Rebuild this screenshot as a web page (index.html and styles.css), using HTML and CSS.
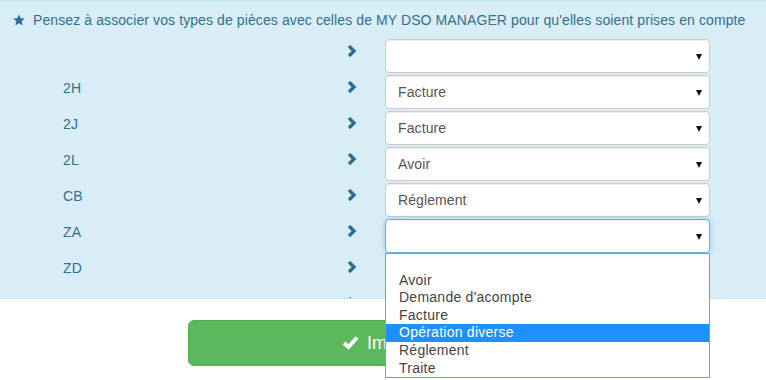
FILE: index.html
```html
<!DOCTYPE html>
<html lang="fr">
<head>
    <meta charset="UTF-8">
    <meta name="viewport" content="width=device-width, initial-scale=1.0">
    <title>Correspondance des types de pièces</title>
    <link rel="stylesheet" href="styles.css">
</head>
<body>
    <div class="page">
        <div class="panel">
            <p class="notice">
                <svg class="star" width="12" height="12" viewBox="0 0 24 24"><path d="M12 0.5l3.3 7.9 8.4 0.6-6.4 5.5 2 8.3L12 18.3l-7.3 4.5 2-8.3L0.3 9l8.4-0.6z"/></svg>
                Pensez à associer vos types de pièces avec celles de MY DSO MANAGER pour qu'elles soient prises en compte
            </p>

            <div class="row">
                <div class="code"></div>
                <div class="arrow"><svg width="10" height="12" viewBox="0 0 10 12"><polyline points="2,1 7,6 2,11"/></svg></div>
                <div class="field"><select class="form-control"><option></option></select></div>
            </div>
            <div class="row">
                <div class="code">2H</div>
                <div class="arrow"><svg width="10" height="12" viewBox="0 0 10 12"><polyline points="2,1 7,6 2,11"/></svg></div>
                <div class="field"><select class="form-control"><option>Facture</option></select></div>
            </div>
            <div class="row">
                <div class="code">2J</div>
                <div class="arrow"><svg width="10" height="12" viewBox="0 0 10 12"><polyline points="2,1 7,6 2,11"/></svg></div>
                <div class="field"><select class="form-control"><option>Facture</option></select></div>
            </div>
            <div class="row">
                <div class="code">2L</div>
                <div class="arrow"><svg width="10" height="12" viewBox="0 0 10 12"><polyline points="2,1 7,6 2,11"/></svg></div>
                <div class="field"><select class="form-control"><option>Avoir</option></select></div>
            </div>
            <div class="row">
                <div class="code">CB</div>
                <div class="arrow"><svg width="10" height="12" viewBox="0 0 10 12"><polyline points="2,1 7,6 2,11"/></svg></div>
                <div class="field"><select class="form-control"><option>Réglement</option></select></div>
            </div>
            <div class="row">
                <div class="code">ZA</div>
                <div class="arrow"><svg width="10" height="12" viewBox="0 0 10 12"><polyline points="2,1 7,6 2,11"/></svg></div>
                <div class="field"><select class="form-control focus"><option></option></select></div>
            </div>
            <div class="row">
                <div class="code">ZD</div>
                <div class="arrow"><svg width="10" height="12" viewBox="0 0 10 12"><polyline points="2,1 7,6 2,11"/></svg></div>
                <div class="field"><select class="form-control"><option></option></select></div>
            </div>
            <!-- next row, only its chevron peeks above the panel edge -->
            <div class="row">
                <div class="code"></div>
                <div class="arrow"><svg width="10" height="12" viewBox="0 0 10 12"><polyline points="2,1 7,6 2,11"/></svg></div>
                <div class="field"></div>
            </div>
        </div>

        <div class="actions">
            <button class="btn-success">
                <svg class="check" width="17" height="15" viewBox="0 0 17 15"><polyline points="2,8 6.5,12 15,2.5"/></svg>
                Importer
            </button>
        </div>

        <ul class="dropdown">
            <li>&nbsp;</li>
            <li>Avoir</li>
            <li>Demande d'acompte</li>
            <li>Facture</li>
            <li class="selected">Opération diverse</li>
            <li>Réglement</li>
            <li>Traite</li>
        </ul>
    </div>
</body>
</html>
```

FILE: styles.css
```css
body {
    font-family: "Liberation Sans", Arial, sans-serif;
    font-size: 14px;
    letter-spacing: 0.1px;
    margin: 0;
    background-color: #fff;
    color: #333;
}
.page {
    position: relative;
    height: 380px;
    overflow: hidden;
}
.panel {
    background-color: #d9edf7;
    border-top: 1px solid #bce8f1;
    border-bottom: 1px solid #bce8f1;
    height: 297px;
    overflow: hidden;
    color: #31708f;
}
.notice {
    margin: 0 0 9px 0;
    padding: 9px 0 0 13px;
    line-height: 20px;
    white-space: nowrap;
}
.star {
    fill: #2d6ca2;
    vertical-align: -1px;
    margin-right: 4px;
}
.row {
    display: grid;
    grid-template-columns: 347px 38px 325px;
    height: 34px;
    margin-bottom: 2px;
}
.code {
    padding: 3px 0 0 63px;
    line-height: 20px;
}
.arrow {
    padding-top: 6px;
}
.arrow svg {
    display: block;
    fill: none;
    stroke: #2f6c8c;
    stroke-width: 3.4;
    stroke-linejoin: miter;
}
.field {
    position: relative;
}
.field:has(select)::after {
    content: "";
    position: absolute;
    right: 8px;
    top: 15px;
    border-left: 3px solid transparent;
    border-right: 3px solid transparent;
    border-top: 6px solid #111;
}
.form-control {
    display: block;
    width: 325px;
    height: 34px;
    padding: 6px 12px;
    font-family: inherit;
    font-size: 14px;
    letter-spacing: 0.1px;
    color: #555;
    background-color: #fff;
    border: 1px solid #ccc;
    border-radius: 4px;
    box-shadow: inset 0 1px 1px rgba(0,0,0,0.075);
    -webkit-appearance: none;
    appearance: none;
    outline: none;
}
.form-control.focus {
    border-color: #66afe9;
    box-shadow: inset 0 1px 1px rgba(0,0,0,0.075), 0 0 6px rgba(102,175,233,0.6);
}
.actions {
    padding: 21px 0 0 188px;
}
.btn-success {
    width: 400px;
    height: 46px;
    padding: 10px 16px;
    font-family: inherit;
    font-size: 18px;
    line-height: 24px;
    color: #fff;
    background-color: #5cb85c;
    border: 1px solid #4cae4c;
    border-radius: 6px;
}
.check {
    fill: none;
    stroke: #fff;
    stroke-width: 4;
    vertical-align: -1px;
    margin-right: 3px;
}
.dropdown {
    position: absolute;
    top: 253px;
    left: 385px;
    width: 323px;
    margin: 0;
    padding: 0;
    list-style: none;
    background-color: #fff;
    border: 1px solid #7f9db9;
    color: #444;
    font-size: 14px;
    letter-spacing: 0.25px;
}
.dropdown li {
    height: 17.6px;
    line-height: 17.6px;
    padding-left: 13px;
}
.dropdown .selected {
    background-color: #1e90ff;
    color: #fff;
}
```
